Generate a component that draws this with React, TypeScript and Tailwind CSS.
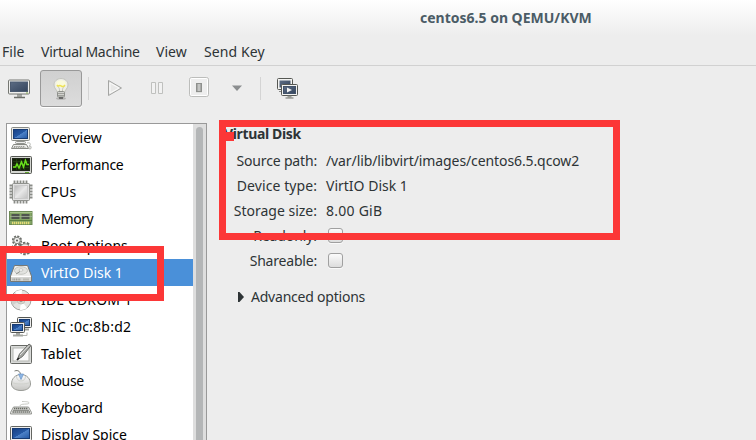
import React from "react";

type IconProps = { children: React.ReactNode; className?: string };

function Icon({ children, className = "" }: IconProps) {
  return (
    <svg viewBox="0 0 24 24" className={`h-6 w-6 shrink-0 ${className}`} fill="none">
      {children}
    </svg>
  );
}

function Gradients() {
  return (
    <svg className="absolute h-0 w-0">
      <defs>
        <linearGradient id="blue" x1="0" y1="0" x2="1" y2="1">
          <stop offset="0" stopColor="#163f83" />
          <stop offset=".5" stopColor="#2559a5" />
          <stop offset=".52" stopColor="#4d82c8" />
          <stop offset="1" stopColor="#2358a4" />
        </linearGradient>
        <linearGradient id="slate" x1="0" y1="0" x2="1" y2="1">
          <stop offset="0" stopColor="#5c6c84" />
          <stop offset="1" stopColor="#34445c" />
        </linearGradient>
        <linearGradient id="metal" x1="0" y1="0" x2="0" y2="1">
          <stop offset="0" stopColor="#fdfdfd" />
          <stop offset="1" stopColor="#c4c4c1" />
        </linearGradient>
        <linearGradient id="chip" x1="0" y1="0" x2="1" y2="1">
          <stop offset="0" stopColor="#b8b8b8" />
          <stop offset=".5" stopColor="#e8e8e8" />
          <stop offset="1" stopColor="#c0c0c0" />
        </linearGradient>
      </defs>
    </svg>
  );
}

const OverviewIcon = () => (
  <Icon>
    <path d="M4.5 18.5h13l2 4h-17z" fill="#ededeb" stroke="#888a85" />
    <path d="M5 20.5h11M4.5 21.7h12" stroke="#999b96" strokeDasharray="1.5 .7" />
    <path d="M8 14h6v2.5H8z" fill="#aaa" />
    <rect x="6.5" y="15.5" width="10" height="2" rx="1" fill="#eee" stroke="#92948f" />
    <rect x="2.5" y="1.5" width="18" height="13" rx="1" fill="#e9e9e6" stroke="#898b86" />
    <rect x="4.5" y="3.5" width="14" height="9" fill="url(#blue)" stroke="#173c75" />
    <path d="M18 17c4-1 4 2 2 3" stroke="#b6b8b2" />
    <ellipse cx="21" cy="21.5" rx="1.2" ry="1.6" fill="#e8e8e5" stroke="#a0a29d" strokeWidth=".7" />
  </Icon>
);

const PerformanceIcon = () => (
  <Icon>
    <rect x="1.5" y="3.5" width="21" height="17" rx="1" fill="#d4d6d1" stroke="#555753" />
    <rect x="3.5" y="5.5" width="17" height="12" fill="#142209" stroke="#20251b" />
    <path d="M4 8.5h16M4 11.5h16M4 14.5h16M7.5 6v11M11.5 6v11M15.5 6v11" stroke="#2d4a19" strokeWidth=".6" />
    <path d="M4 14h2.5l1.5-3 2 4 2.5-6 2 5 2-6.5 1.5 4H20" stroke="#69e01c" strokeWidth="1.5" />
    <path d="M16 19.5h4" stroke="#62a532" />
  </Icon>
);

const CpuIcon = () => (
  <Icon>
    <path d="M5.5 .5v23M8.5 .5v23M11.5 .5v23M14.5 .5v23M17.5 .5v23M.5 5.5h23M.5 8.5h23M.5 11.5h23M.5 14.5h23M.5 17.5h23" stroke="#8a8c87" strokeWidth="1.8" />
    <rect x="3.5" y="3.5" width="17" height="17" rx="1" fill="#e2e2e2" stroke="#90928e" />
    <rect x="5.5" y="5.5" width="13" height="13" fill="url(#chip)" stroke="#cacaca" />
  </Icon>
);

const MemoryIcon = () => (
  <Icon>
    <rect x=".5" y="4.5" width="22.5" height="13" fill="#84a665" stroke="#6d8a55" />
    <path d="M1 5.5h22" stroke="#a9c48c" />
    <path d="M2.5 7h8v5h-8zM12.5 7h8v5h-8z" fill="#50554f" />
    <path d="M1 9.500h22" stroke="#a4b39a" strokeWidth=".8" />
    <path d="M1 13.500h22" stroke="#5d8043" />
    <path d="M3 16h18" stroke="#e6dc77" strokeWidth="2.400" strokeDasharray="1.300 .7" />
  </Icon>
);

const BootIcon = () => (
  <Icon>
    <circle cx="8" cy="6.5" r="4" stroke="#6c6f69" strokeWidth="2.2" strokeDasharray="2 1.1" />
    <circle cx="8" cy="6.5" r="3.2" fill="#f0f0ee" stroke="#888a85" />
    <circle cx="8" cy="6.5" r="1" fill="#555" />
    <circle cx="16" cy="14.5" r="5.7" stroke="#6c6f69" strokeWidth="2.2" strokeDasharray="2.5 1.5" />
    <circle cx="16" cy="14.5" r="4.7" fill="#ededeb" stroke="#8c8e89" />
    <circle cx="16" cy="14.5" r="2" fill="#fff" stroke="#666" />
    <circle cx="5.500" cy="14.5" r="2.8" fill="#e8e8e6" stroke="#686b65" strokeDasharray="1.5 1" strokeWidth="1.5" />
  </Icon>
);

const DiskIcon = () => (
  <Icon>
    <path d="M5.5 4.500h13L22.5 15v5.5h-21V15z" fill="#d3d4d2" stroke="#777975" />
    <path d="M6 5h12l3.5 10h-19z" fill="#eeeeec" />
    <ellipse cx="12" cy="9.5" rx="6.500" ry="3.800" fill="#e2e3e0" stroke="#c4c6c1" />
    <ellipse cx="12" cy="9" rx="2" ry="1.2" fill="#fff" stroke="#a4a6a0" strokeWidth=".6" />
    <path d="M7 13l4-2.500" stroke="#92948f" />
    <path d="M2 15.5h20" stroke="#fff" />
    <path d="M3.5 18.5h8" stroke="#969894" strokeWidth="2" strokeDasharray="1 .7" />
    <path d="M14 18.5h6" stroke="#b8bab5" strokeWidth="2" />
  </Icon>
);

const CdIcon = () => (
  <Icon>
    <circle cx="12" cy="12" r="10" fill="#e3e3e0" stroke="#a3a4a0" />
    <path d="M12 12L6 4a10 10 0 0 1 7-2zM12 12l6 8a10 10 0 0 1-7 2z" fill="#fff" />
    <path d="M12 12l8-5a9 9 0 0 1 2 5zM12 12l-8 5a9 9 0 0 1-2-5z" fill="#cfd0cc" />
    <circle cx="12" cy="12" r="4" fill="#d8d5ca" stroke="#c1c2bd" />
    <circle cx="12" cy="12" r="1.7" fill="#fff" stroke="#999" />
  </Icon>
);

const NicIcon = () => (
  <Icon>
    <rect x="8.5" y="2.5" width="14" height="10" rx="1" fill="#eee" stroke="#555753" />
    <rect x="10.5" y="4.5" width="10" height="6" fill="url(#blue)" stroke="#173b73" />
    <path d="M14 14.5h6" stroke="#9a9c96" strokeWidth="2" />
    <rect x="1.5" y="7.5" width="14" height="10" rx="1" fill="#eee" stroke="#555753" />
    <rect x="3.5" y="9.5" width="10" height="6" fill="url(#blue)" stroke="#173b73" />
    <path d="M7 18h4v1.5h3v2H4v-2h3z" fill="#a5a7a2" />
    <path d="M14 20.5h4v-3" stroke="#b4b5b1" />
  </Icon>
);

const TabletIcon = () => (
  <Icon>
    <rect x="1.5" y="3.5" width="21" height="18" rx="1" fill="#d9dad8" stroke="#666864" />
    <rect x="4" y="6" width="16" height="13" fill="#fafafa" stroke="#b4b6b1" />
    <path d="M8 18l2.5-6L20 2l2 1.5-8.5 11z" fill="#a3a5a1" stroke="#6c6e6a" />
    <path d="M11 13L20 3.5" stroke="#e8e8e8" />
    <path d="M8 18l2-2" stroke="#222" strokeWidth="1.5" />
  </Icon>
);

const MouseIcon = () => (
  <Icon>
    <path d="M5.500 2c4-1.500 6 1 6 4" stroke="#777974" />
    <path d="M12 5.5c6 0 9.500 4.500 9.500 9.5 0 4-4 6.5-9.500 6.5S2.500 19 2.500 15c0-5 3.500-9.500 9.500-9.500z" fill="url(#metal)" stroke="#999b96" />
    <path d="M3 13.500c4 2 14 2 18 0M7.500 7c0 3 1.500 5 4.500 5s4.500-2 4.500-5" stroke="#d0d2cd" />
    <path d="M9.500 5l2.500 5.500L14.500 5z" fill="#8db6e5" stroke="#6d97c8" strokeWidth=".7" />
  </Icon>
);

const KeyboardIcon = () => (
  <Icon>
    <path d="M11 10c0-3 9-1 9-3 0-1.500-4-1.500-7-1.500" stroke="#c7c9c3" />
    <path d="M4.5 11h15l3 5.500v1.5H1.500v-1.500z" fill="#dededb" stroke="#959792" />
    <path d="M5 12.500h14M4.300 14.300h15.500M3.500 16h17.500" stroke="#696c66" strokeWidth="1.300" strokeDasharray="1.400 .6" />
  </Icon>
);

const DisplayIcon = () => (
  <Icon>
    <rect x="1.5" y="3.5" width="21" height="14" rx="1" fill="#eee" stroke="#646661" />
    <rect x="3.5" y="5.5" width="17" height="10" fill="url(#blue)" stroke="#173b73" />
    <path d="M10 18h4v2.5h-4z" fill="#aaaca6" />
    <path d="M6.5 21.5h11" stroke="#858782" strokeWidth="2" />
  </Icon>
);

const ConsoleIcon = () => (
  <Icon>
    <path d="M10 17h5v3h-5z" fill="#a5a7a3" />
    <path d="M7 20.500h11" stroke="#6c6e69" strokeWidth="1.500" />
    <rect x="1.5" y="3" width="21" height="14" rx="1" fill="#f0f0ee" stroke="#757772" />
    <rect x="3.5" y="5" width="17" height="9.500" fill="url(#slate)" stroke="#4b5a70" />
    <path d="M19 16h2" stroke="#85ac55" />
  </Icon>
);

const BulbIcon = () => (
  <Icon>
    <ellipse cx="12" cy="21.5" rx="5" ry="1.3" fill="#b4b4b2" />
    <path d="M12 1.5c4 0 7 2.8 7 6.5 0 3.5-3 4.5-3.500 8h-7C8 12.500 5 11.500 5 8c0-3.700 3-6.500 7-6.500z" fill="#eeeee6" stroke="#c3c4be" />
    <ellipse cx="12" cy="7" rx="5" ry="3.8" fill="#fafadb" />
    <path d="M8.5 8c0 3 2 1 2 6M15.500 8c0 3-2 1-2 6" stroke="#b8b9ae" strokeWidth=".8" />
    <path d="M8 8c1.500 2.500 2-.5 4 .8s2.500 1 4-.8" stroke="#eee253" strokeWidth="1.500" />
    <rect x="8.5" y="14.5" width="7" height="5.5" rx="1" fill="#d2d3cf" stroke="#8e908b" />
    <path d="M9 16.500h6M9 18.500h6" stroke="#a0a19c" />
    <path d="M10 21h4" stroke="#555" strokeWidth="1.5" />
  </Icon>
);

const ScreensIcon = () => (
  <Icon>
    <rect x="2.5" y="2.500" width="15" height="11" rx="1" fill="#f3f3f1" stroke="#555753" />
    <rect x="4.5" y="4.5" width="11" height="7" fill="url(#slate)" />
    <path d="M4 15.500h3" stroke="#888" />
    <rect x="6.5" y="8.500" width="16" height="11" rx="1" fill="#f3f3f1" stroke="#555753" />
    <rect x="8.5" y="10.500" width="12" height="7" fill="url(#slate)" stroke="#43536b" />
    <path d="M12 11.500l5 2.500-5 2.500z" fill="#f2f2f2" />
    <path d="M10.500 22h8M12.500 20.500h4" stroke="#999b96" strokeWidth="1.500" />
  </Icon>
);

const hardware = [
  { label: "Overview", icon: <OverviewIcon />, tracking: "tracking-[-0.05px]" },
  { label: "Performance", icon: <PerformanceIcon />, tracking: "tracking-[-0.27px]" },
  { label: "CPUs", icon: <CpuIcon />, tracking: "tracking-[0.3px]" },
  { label: "Memory", icon: <MemoryIcon />, tracking: "tracking-[-0.5px]" },
  { label: "Boot Options", icon: <BootIcon />, tracking: "tracking-[0px]" },
  { label: "VirtIO Disk 1", icon: <DiskIcon />, tracking: "tracking-[0px]", selected: true },
  { label: "IDE CDROM 1", icon: <CdIcon />, tracking: "tracking-[0.15px]" },
  { label: "NIC :0c:8b:d2", icon: <NicIcon />, tracking: "tracking-[0.25px]" },
  { label: "Tablet", icon: <TabletIcon />, tracking: "tracking-[0.1px]" },
  { label: "Mouse", icon: <MouseIcon />, tracking: "tracking-[-0.3px]" },
  { label: "Keyboard", icon: <KeyboardIcon />, tracking: "tracking-[-0.1px]" },
  { label: "Display Spice", icon: <DisplayIcon />, tracking: "tracking-[0px]" },
];

function Field({ label, children, tracking = "" }: { label: string; children: React.ReactNode; tracking?: string }) {
  return (
    <div className="flex h-[25px] items-center gap-[9px]">
      <span className={`w-[92px] text-right ${tracking}`}>{label}</span>
      {children}
    </div>
  );
}

const Checkbox = () => (
  <span className="ml-[2px] h-[15px] w-[15px] rounded-[3px] border border-[#a0a0a0] bg-linear-to-b from-[#fbfbfb] to-[#dddddd] shadow-[0_1px_0_#fafafa]" />
);

export default function App() {
  return (
    <div className="relative flex h-[440px] w-[756px] flex-col overflow-hidden bg-[#ededed] font-['Noto_Sans',sans-serif] text-[14px] leading-5 whitespace-pre text-[#2e3436]">
      <Gradients />
      <header className="h-9 shrink-0 bg-linear-to-b from-white to-[#ededed] pt-2 pl-[420px] text-[14px] font-bold text-[#4b5c66]">
        centos6.5 on QEMU/KVM
      </header>
      <nav className="flex h-[30px] shrink-0 border-b border-[#d1d1d1] pt-[6px] pl-[2px]">
        <span className="w-[39px]">File</span>
        <span className="w-[115px] tracking-[-0.27px]">Virtual Machine</span>
        <span className="w-[48px]">View</span>
        <span className="tracking-[0.1px]">Send Key</span>
      </nav>
      <div className="flex h-[57px] shrink-0 items-start pt-1 pl-[7px]">
        <div className="flex h-[37px] w-[33px] items-center"><ConsoleIcon /></div>
        <div className="flex h-[37px] w-[42px] items-center justify-center rounded-[3px] border border-[#999] bg-linear-to-b from-[#d0d0d0] to-[#dcdcdc] shadow-[0_1px_0_#fff]"><BulbIcon /></div>
        <div className="mt-[7px] ml-[6px] h-[23px] w-px bg-[#d4d4d4]" />
        <div className="mt-[6px] ml-[13px]">
          <Icon><path d="M6.5 4.5v15l13-7.500z" fill="#e8e8e7" stroke="#a4a5a3" /><path d="M8 7v10l9-5z" stroke="#fafafa" /></Icon>
        </div>
        <div className="mt-[6px] ml-[19px]">
          <Icon><path d="M6.5 6.5h4v11h-4zM13.500 6.500h4v11h-4z" fill="#f2f2f2" stroke="#bfc0be" /></Icon>
        </div>
        <div className="mt-[6px] ml-[18px]">
          <Icon>
            <rect x="2.5" y="1.500" width="19" height="19" rx="2" fill="#eee" stroke="#bcbdbb" />
            <rect x="3.5" y="2.500" width="17" height="17" rx="1" stroke="#fff" />
            <rect x="9" y="7" width="6" height="10" fill="#e0e1df" />
            <path d="M9 7h6v9H9z" fill="#8e908d" /><path d="M10.500 8h3v7h-3z" fill="#c4c5c3" />
          </Icon>
        </div>
        <div className="mt-[6px] ml-[14px]">
          <Icon><path d="M7 9.500h10l-5 5.500z" fill="#8b8e8f" /></Icon>
        </div>
        <div className="mt-[7px] ml-[11px] h-[23px] w-px bg-[#d4d4d4]" />
        <div className="mt-[6px] ml-[14px]"><ScreensIcon /></div>
      </div>
      <main className="flex min-h-0 flex-1">
        <aside className="ml-[6px] flex h-[320px] w-[201px] shrink-0 overflow-hidden border border-b-0 border-[#999] bg-white">
          <ul className="w-[186px] shrink-0 text-black">
            {hardware.map((item) => (
              <li key={item.label} className={`flex h-[27px] items-center gap-[8px] pl-[2px] ${item.selected ? "bg-[#4a90d9] text-white" : ""}`}>
                {item.icon}
                <span className={item.tracking}>{item.label}</span>
              </li>
            ))}
          </ul>
          <div className="flex h-full flex-1 bg-[#dedede] pt-[3px] pl-[3px]">
            <div className="h-[340px] w-[7px] rounded-full bg-[#b4b6b7]" />
          </div>
        </aside>
        <section className="ml-[17px] pt-px">
          <h2 className="h-[24px] text-[14px] font-bold tracking-[-0.35px]">Virtual Disk</h2>
          <div className="pl-px">
            <Field label="Source path:" tracking="tracking-[-0.17px]"><span className="tracking-[-0.1px]">/var/lib/libvirt/images/centos6.5.qcow2</span></Field>
            <Field label="Device type:" tracking="tracking-[0.08px]"><span>VirtIO Disk 1</span></Field>
            <Field label="Storage size:"><span className="tracking-[0.25px]">8.00 GiB</span></Field>
            <Field label="Readonly:" tracking="tracking-[-0.1px]"><Checkbox /></Field>
            <Field label="Shareable:" tracking="tracking-[-0.2px]"><Checkbox /></Field>
          </div>
          <div className="mt-[14px] flex items-center gap-[7px] pl-[14px]">
            <svg viewBox="0 0 6 10" className="-mt-px h-[10px] w-[6px]"><path d="M0 0h1.500L6 5l-4.500 5H0z" fill="#2e3436" /></svg>
            <span className="tracking-[-0.22px]">Advanced options</span>
          </div>
        </section>
      </main>
      <div className="absolute top-[246px] -left-px h-[55px] w-[165px] border-[7px] border-[#fc3737]" />
      <div className="absolute top-[120px] left-[219px] h-[120px] w-[401px] border-[7px] border-[#fc3737]" />
      <div className="absolute top-[132px] left-[226px] h-[9px] w-[8px] bg-[#fc3737]" />
    </div>
  );
}
